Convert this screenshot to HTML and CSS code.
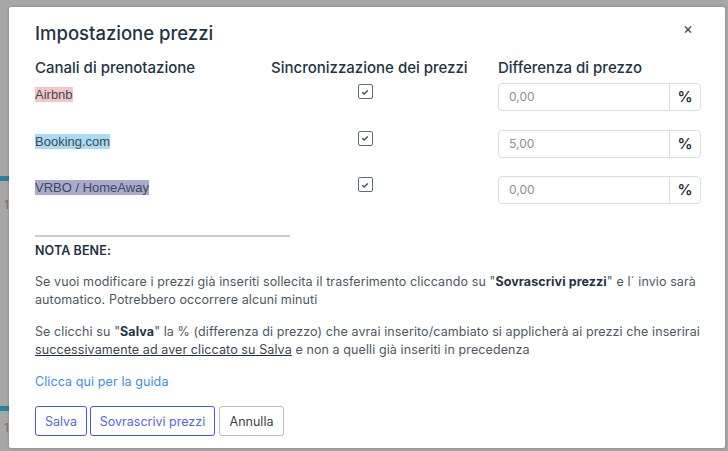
FILE: index.html
```html
<!DOCTYPE html>
<html lang="it">
<head>
<meta charset="utf-8">
<title>Impostazione prezzi</title>
<link rel="stylesheet" href="styles.css">
</head>
<body>
<div class="backdrop">
  <span class="bg-num bg-num-1">1</span>
  <span class="bg-bar bg-bar-1"></span>
  <span class="bg-num bg-num-2">1</span>
  <span class="bg-bar bg-bar-2"></span>
  <div class="modal">
    <div class="modal-head">
      <h1 class="title">Impostazione prezzi</h1>
      <span class="close">×</span>
    </div>
    <div class="grid">
      <div class="col-h">Canali di prenotazione</div>
      <div class="col-h sync-h">Sincronizzazione dei prezzi</div>
      <div class="col-h">Differenza di prezzo</div>

      <div class="cell"><span class="chan chan-airbnb">Airbnb</span></div>
      <div class="cell sync"><span class="check"><svg viewBox="0 0 10 10" width="10" height="10"><path d="M2.3 5.2 L4.2 7 L7.8 3.4" fill="none" stroke="#3e4f5c" stroke-width="1.4"/></svg></span></div>
      <div class="cell"><div class="input"><span class="val">0,00</span><span class="addon">%</span></div></div>

      <div class="cell"><span class="chan chan-booking">Booking.com</span></div>
      <div class="cell sync"><span class="check"><svg viewBox="0 0 10 10" width="10" height="10"><path d="M2.3 5.2 L4.2 7 L7.8 3.4" fill="none" stroke="#3e4f5c" stroke-width="1.4"/></svg></span></div>
      <div class="cell"><div class="input"><span class="val">5,00</span><span class="addon">%</span></div></div>

      <div class="cell"><span class="chan chan-vrbo">VRBO / HomeAway</span></div>
      <div class="cell sync"><span class="check"><svg viewBox="0 0 10 10" width="10" height="10"><path d="M2.3 5.2 L4.2 7 L7.8 3.4" fill="none" stroke="#3e4f5c" stroke-width="1.4"/></svg></span></div>
      <div class="cell"><div class="input"><span class="val">0,00</span><span class="addon">%</span></div></div>
    </div>
    <hr class="sep">
    <p class="nota">NOTA BENE:</p>
    <p class="txt">Se vuoi modificare i prezzi già inseriti sollecita il trasferimento cliccando su "<b>Sovrascrivi prezzi</b>" e l´ invio sarà automatico. Potrebbero occorrere alcuni minuti</p>
    <p class="txt">Se clicchi su "<b>Salva</b>" la % (differenza di prezzo) che avrai inserito/cambiato si applicherà ai prezzi che inserirai <u>successivamente ad aver cliccato su Salva</u> e non a quelli già inseriti in precedenza</p>
    <p class="link">Clicca qui per la guida</p>
    <div class="actions">
      <button class="btn btn-primary btn-salva">Salva</button>
      <button class="btn btn-primary btn-sovr">Sovrascrivi prezzi</button>
      <button class="btn btn-default btn-annulla">Annulla</button>
    </div>
  </div>
</div>
</body>
</html>
```

FILE: styles.css
```css
* { box-sizing: border-box; }
html, body { margin: 0; padding: 0; }
body {
  width: 728px;
  height: 451px;
  overflow: hidden;
  background: #a7a7a7;
  font-family: Inter, "Noto Sans", sans-serif;
}
.backdrop {
  position: relative;
  width: 728px;
  height: 451px;
  padding: 7px 3px 0 9px;
}
.bg-num {
  position: absolute;
  left: 4px;
  font-size: 12px;
  color: #8a6a4a;
}
.bg-num-1 { top: 197px; }
.bg-num-2 { top: 420px; }
.bg-bar {
  position: absolute;
  left: 0;
  width: 9px;
  height: 5px;
  background: #2a7fa6;
}
.bg-bar-1 { top: 176px; }
.bg-bar-2 { top: 406px; }
.modal {
  position: relative;
  width: 716px;
  height: 441px;
  background: #fff;
  border-radius: 2px;
  box-shadow: 0 0 3px rgba(0,0,0,0.25);
  padding: 12px 14px 0 26px;
  color: #1e3444;
}
.modal-head {
  display: flex;
  justify-content: space-between;
  align-items: flex-start;
}
.title {
  margin: 0;
  font-size: 18.5px;
  font-weight: 500;
  line-height: 28px;
}
.close {
  font-size: 15px;
  color: #444;
  margin: 2px 18px 0 0;
  line-height: 15px;
}
.grid {
  display: grid;
  grid-template-columns: 236px 227px 202px;
  margin-top: 10px;
}
.col-h {
  font-size: 15px;
  font-weight: 500;
  line-height: 22px;
  height: 22px;
  white-space: nowrap;
}
.sync-h { width: 193px; }
.cell {
  height: 46.5px;
  padding-top: 4px;
}
.chan {
  font-family: "Liberation Sans", Arial, sans-serif;
  font-size: 13px;
  line-height: 15px;
  color: #3d4a55;
  display: inline-block;
}
.chan-airbnb { background: #f6c6c6; }
.chan-booking { background: #a9dcf2; }
.chan-vrbo { background: #aaaad0; }
.sync {
  width: 193px;
  display: flex;
  justify-content: center;
  padding-top: 5px;
  padding-right: 5px;
}
.check {
  width: 15px;
  height: 15px;
  border: 1px solid #5d6d79;
  border-radius: 2px;
  display: flex;
  align-items: center;
  justify-content: center;
}
.input {
  display: flex;
  height: 28px;
  width: 203px;
  border: 1px solid #dadde1;
  border-radius: 4px;
}
.val {
  flex: 1;
  font-size: 12px;
  color: #8a8f94;
  padding-left: 10px;
  line-height: 26px;
}
.addon {
  width: 31px;
  border-left: 1px solid #dadde1;
  text-align: center;
  font-size: 15px;
  font-weight: 600;
  color: #1e3444;
  line-height: 26px;
}
.sep {
  margin: 16.5px 0 0 0;
  width: 255px;
  border: 0;
  height: 2px;
  background: #c9cdd1;
}
.nota {
  margin: 5px 0 0 0;
  font-size: 12.5px;
  letter-spacing: 0.1px;
  font-weight: 600;
  line-height: 18px;
  color: #1e3444;
}
.txt {
  margin: 13px 0 0 0;
  font-size: 12.5px;
  letter-spacing: 0.1px;
  line-height: 18px;
  color: #4c5861;
}
.txt + .txt { margin-top: 14px; }
.txt b { color: #1e3444; font-weight: 700; }
.txt u { color: #3a4650; text-decoration-color: #1e3444; }
.link {
  margin: 14px 0 0 0;
  font-size: 12.5px;
  letter-spacing: 0.1px;
  line-height: 18px;
  color: #3a8cf2;
}
.actions {
  display: flex;
  gap: 3px;
  margin-top: 15px;
}
.btn {
  font-family: Inter, "Noto Sans", sans-serif;
  font-size: 12.5px;
  height: 30px;
  padding: 0;
  text-align: center;
  background: #fff;
  border-radius: 3px;
  cursor: pointer;
}
.btn-salva { width: 52px; }
.btn-sovr { width: 125px; }
.btn-annulla { width: 65px; margin-left: 1px; }
.btn-primary {
  border: 1px solid #4457f0;
  color: #5566e6;
}
.btn-default {
  border: 1px solid #b8bcc0;
  color: #3c4348;
}
```
